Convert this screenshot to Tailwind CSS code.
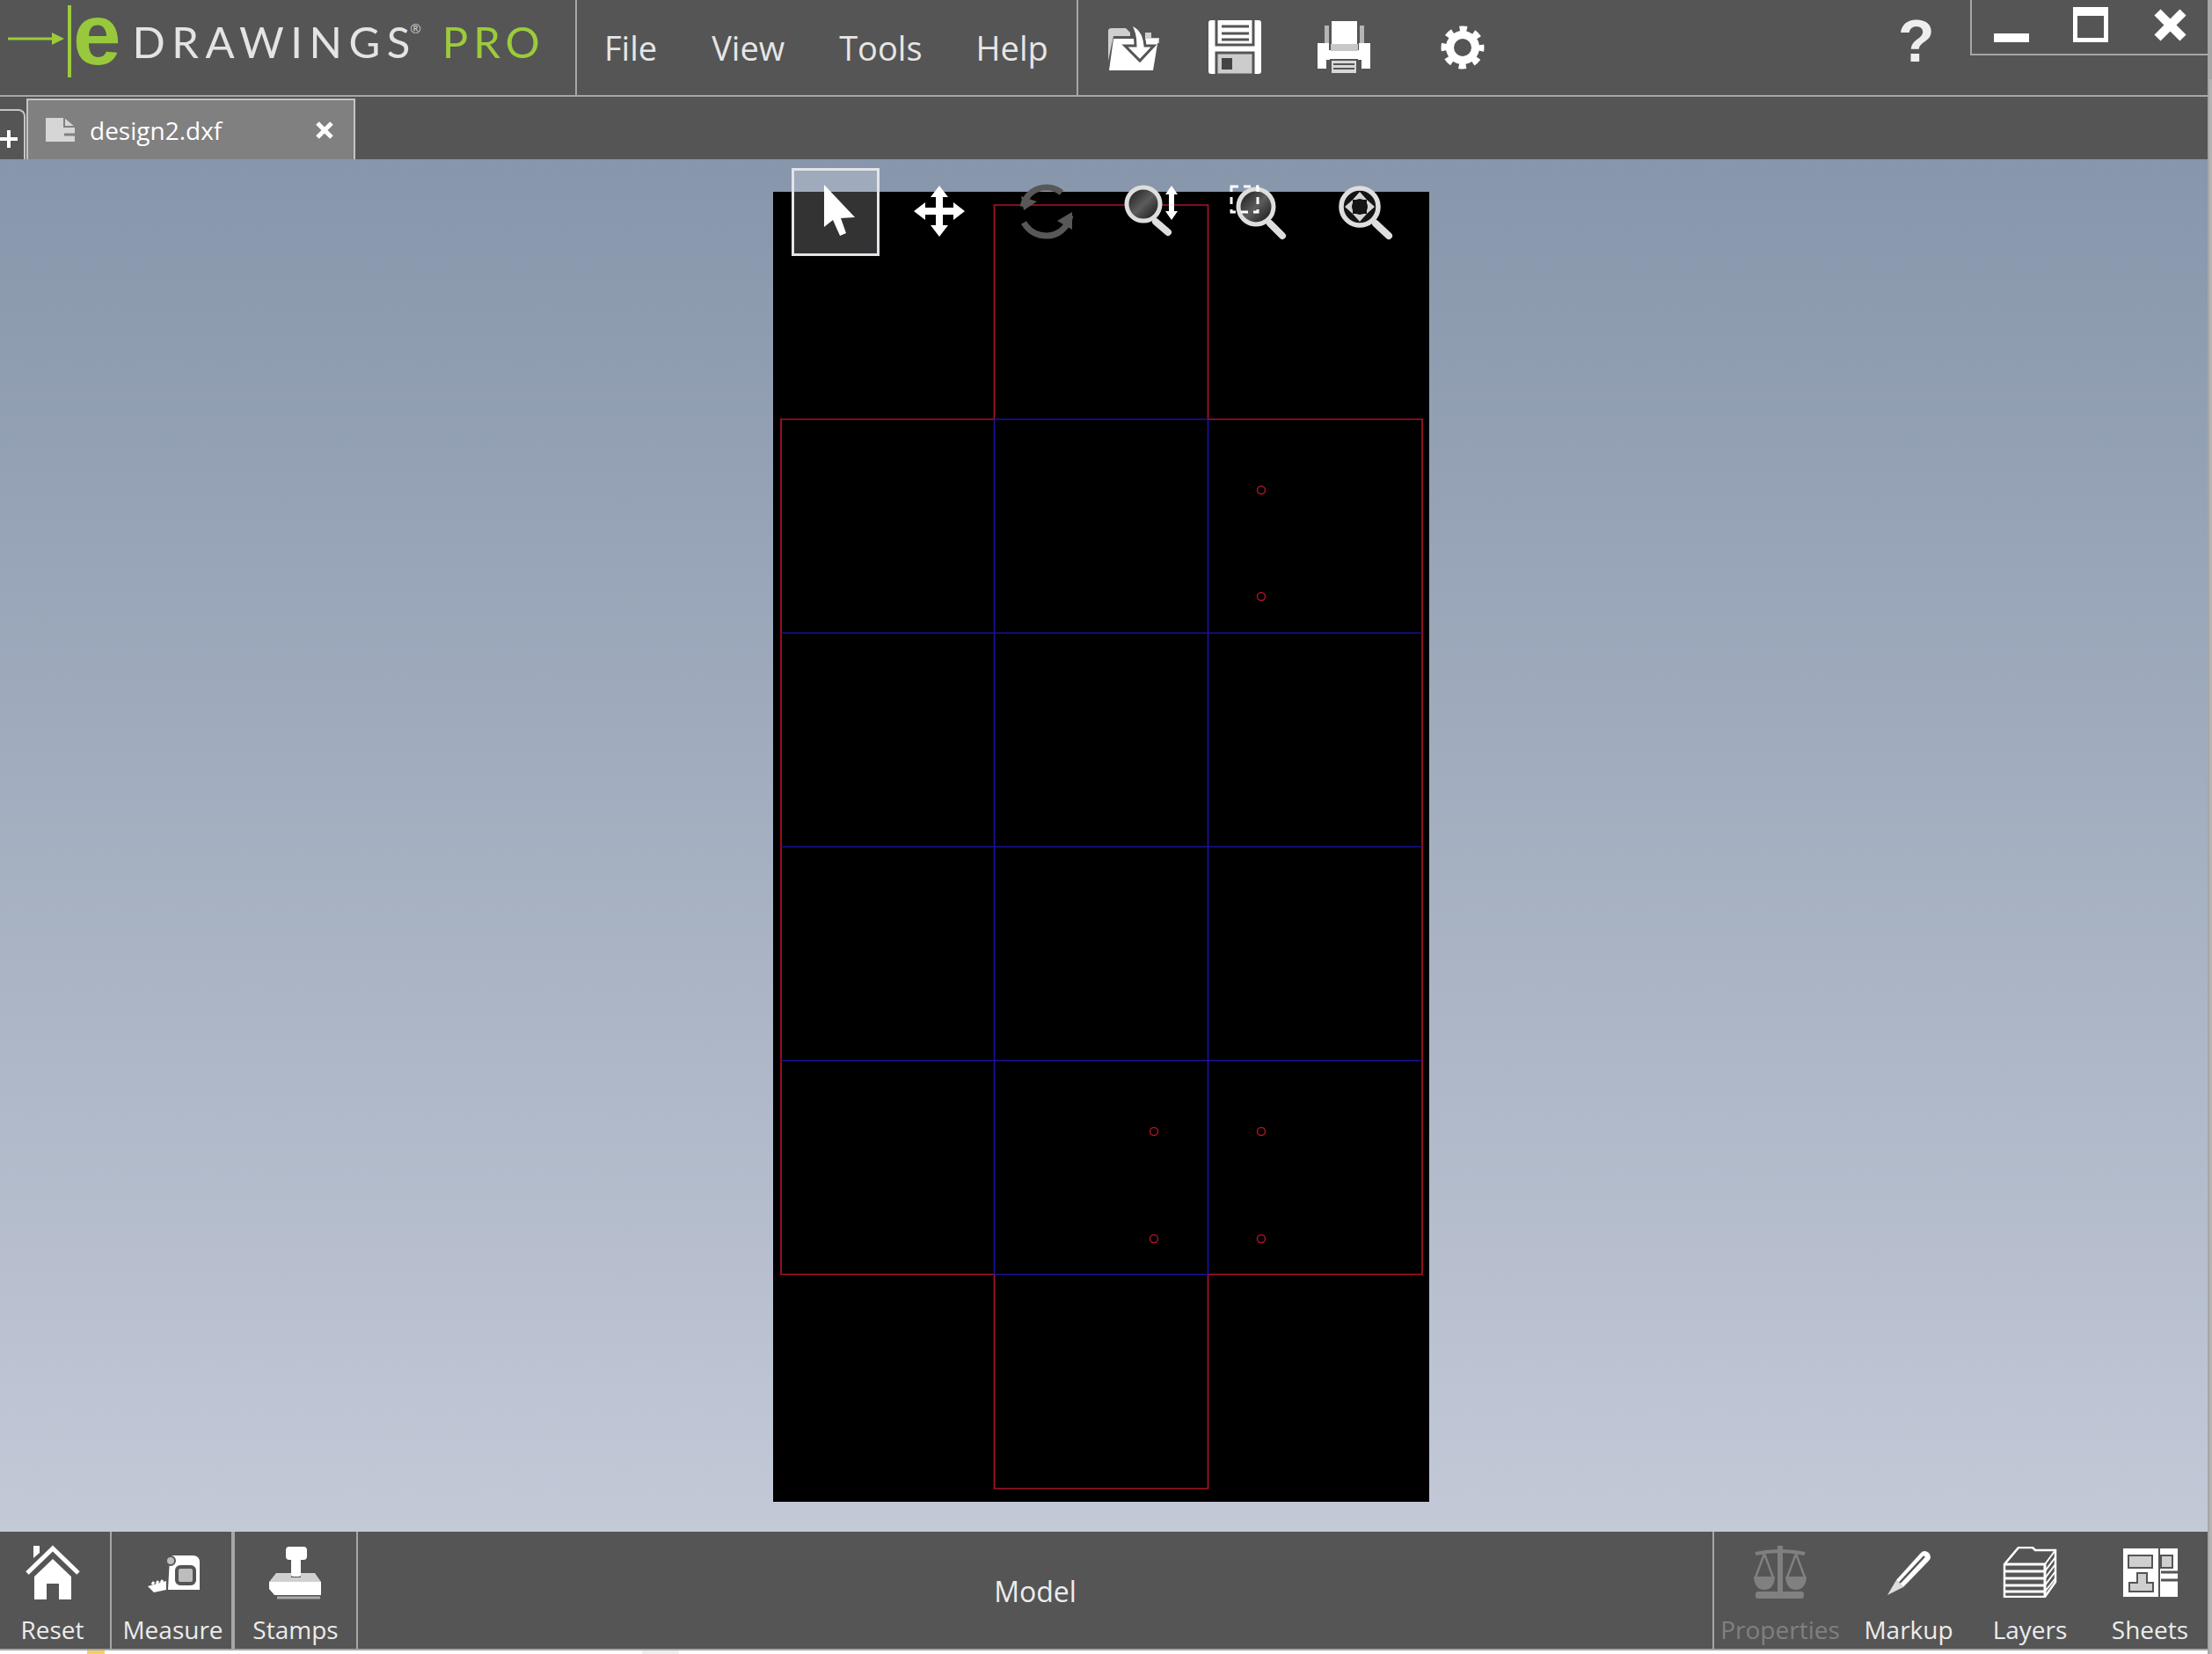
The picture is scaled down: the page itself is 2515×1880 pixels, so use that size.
<!DOCTYPE html>
<html lang="en">
<head>
    <meta charset="UTF-8">
    <title>eDrawings Pro</title>
    <script src="https://cdn.jsdelivr.net/npm/@tailwindcss/browser@4"></script>
</head>
<body class="bg-white overflow-hidden">
<div class="w-[2515px] h-[1880px] flex font-['Open_Sans',sans-serif]">
    <div class="w-[2510px] h-[1880px] flex flex-col">
        <!-- Top bar -->
        <header class="h-[110px] shrink-0 bg-[#555555] border-b-2 border-[#a6a6a6] flex">
            <div class="w-[656px] border-r-2 border-[#a6a6a6] flex items-start">
                <svg class="w-[84px] h-[108px] shrink-0" viewBox="0 0 84 108">
                    <path d="M9 44H62" stroke="#9ccb3b" stroke-width="3" />
                    <path d="M59 37L73 44L59 51Z" fill="#9ccb3b" />
                    <path d="M79 6V88" stroke="#9ccb3b" stroke-width="4" />
                </svg>
                <span class="text-[98px] leading-[78px] font-bold text-[#98c93c] font-['Liberation_Sans',sans-serif] ml-[-1px]">e</span>
                <span class="ml-[13px] mt-[17px] text-[49px] leading-[60px] tracking-[7.5px] text-[#e4e4e4] font-['Lato',sans-serif]">DRAWING<span class="tracking-normal">S</span></span>
                <span class="text-[15px] leading-[20px] mt-[22px] text-[#cccccc]">®</span>
                <span class="ml-[24px] mt-[17px] text-[49px] leading-[60px] tracking-[6px] text-[#9ccb3b] font-['Lato',sans-serif]">PRO</span>
            </div>
            <nav class="w-[570px] border-r-2 border-[#a6a6a6] flex items-center text-[38px] leading-[108px] text-[#e6e6e6] pl-[31px]">
                <span>File</span>
                <span class="ml-[62px]">View</span>
                <span class="ml-[62px]">Tools</span>
                <span class="ml-[61px]">Help</span>
            </nav>
            <div class="flex items-center flex-1">
                <!-- open -->
                <svg class="ml-[32px] w-[60px] h-[54px]" viewBox="0 0 60 54">
                    <path d="M2 42V8Q2 5 6 5H22L27 10V14H8Z" fill="#cfcfcf" />
                    <path d="M44 10H51V16H60V22H44Z" fill="#cfcfcf" />
                    <path d="M8 17H59L53 53H3Z" fill="#ffffff" />
                    <path d="M26 0C38 3 43 12 44 25H54L38 42L21 25H33C33 14 31 6 26 0Z" fill="#ffffff" stroke="#555555" stroke-width="3" />
                </svg>
                <!-- save -->
                <svg class="ml-[56px] w-[60px] h-[62px]" viewBox="0 0 60 62">
                    <rect x="0" y="0" width="60" height="61" rx="3" fill="#ffffff" />
                    <path d="M9 0V28H51V0" fill="none" stroke="#555555" stroke-width="3" />
                    <path d="M15 7H46M15 15H46M15 22H46" stroke="#555555" stroke-width="3" />
                    <rect x="9" y="37" width="42" height="25" fill="#cccccc" stroke="#555555" stroke-width="3" />
                    <rect x="15" y="43" width="12" height="13" fill="#444444" />
                </svg>
                <!-- print -->
                <svg class="ml-[64px] w-[60px] h-[60px]" viewBox="0 0 60 60">
                    <rect x="8" y="5" width="5" height="22" fill="#b5b5b5" />
                    <rect x="48" y="5" width="5" height="22" fill="#b5b5b5" />
                    <rect x="16" y="0" width="29" height="26" fill="#ffffff" />
                    <path d="M0 25H13V33H47V25H60V54H50V44H10V54H0Z" fill="#ffffff" />
                    <rect x="15" y="26" width="31" height="8" fill="#c8c8c8" />
                    <rect x="15" y="44" width="30" height="16" fill="#d8d8d8" stroke="#555555" stroke-width="2" />
                    <path d="M18 49H42M18 54H42" stroke="#555555" stroke-width="2" />
                </svg>
                <!-- settings -->
                <svg class="ml-[80px] w-[50px] h-[50px]" viewBox="0 0 50 50">
                    <circle cx="25" cy="25" r="14.5" fill="none" stroke="#ffffff" stroke-width="9" />
                    <circle cx="25" cy="25" r="21" fill="none" stroke="#ffffff" stroke-width="7" stroke-dasharray="8.25 8.25" stroke-dashoffset="4.1" />
                </svg>
                <span class="ml-[470px] mt-[-16px] text-[68px] leading-[60px] font-bold text-[#eeeeee] font-['Liberation_Sans',sans-serif]">?</span>
                <div class="ml-[40px] self-start flex-1 h-[63px] border-l-2 border-b-2 border-[#a6a6a6] flex items-start">
                    <div class="ml-[25px] mt-[38px] w-[40px] h-[10px] bg-white"></div>
                    <div class="ml-[50px] mt-[8px] w-[40px] h-[40px] border-white border-x-[5px] border-b-[5px] border-t-[10px]"></div>
                    <svg class="ml-[51px] mt-[9px] w-[39px] h-[39px]" viewBox="0 0 39 39">
                        <path d="M5 5L34 34M34 5L5 34" stroke="#ffffff" stroke-width="10" />
                    </svg>
                </div>
            </div>
        </header>
        <!-- Tab strip -->
        <div class="h-[71px] shrink-0 bg-[#555555] flex items-end">
            <div class="w-[29px] h-[57px] border-t-2 border-r-2 border-[#c4c4c4] rounded-tr-[8px]">
                <svg class="w-[20px] h-[20px] mt-[22px]" viewBox="0 0 20 20"><path d="M0 10H20M10 0V20" stroke="#ffffff" stroke-width="4" /></svg>
            </div>
            <div class="w-[374px] h-[69px] ml-[1px] bg-[#808080] border-2 border-b-0 border-[#c4c4c4] flex items-center">
                <svg class="ml-[19px] w-[35px] h-[28px] shrink-0" viewBox="0 0 35 28">
                    <path d="M1 0H22L34 10V27H1Z" fill="#d6d6d6" />
                    <path d="M22 0V10H34" fill="none" stroke="#808080" stroke-width="2" />
                    <path d="M22 19H34" stroke="#808080" stroke-width="3" />
                </svg>
                <span class="ml-[16px] text-[28px] leading-[40px] text-white">design2.dxf</span>
                <svg class="ml-[107px] w-[20px] h-[20px]" viewBox="0 0 20 20"><path d="M2 2L18 18M18 2L2 18" stroke="#ffffff" stroke-width="5" /></svg>
            </div>
        </div>
        <!-- Viewport -->
        <main class="h-[1560px] shrink-0 relative bg-gradient-to-b from-[#8796ab] to-[#c3c9d7] pl-[879px] pt-[37px]">
            <svg class="w-[746px] h-[1489px] bg-black" viewBox="879 218 746 1489">
                <g fill="none" stroke-width="1.7">
                    <path d="M1130.5 476.5V233H1373.5V476.5H1617V1448.5H1373.5V1692H1130.5V1448.5H888V476.5Z" stroke="#a81426" />
                    <path d="M1130.5 476.5H1373.5M888 719.5H1617M888 962.5H1617M888 1205.5H1617M1130.5 1448.5H1373.5M1130.5 476.5V1448.5M1373.5 476.5V1448.5" stroke="#1a119c" />
                    <g stroke="#a81426" stroke-width="1.5">
                        <circle cx="1434" cy="557" r="4.5" />
                        <circle cx="1434" cy="678" r="4.5" />
                        <circle cx="1312" cy="1286" r="4.5" />
                        <circle cx="1434" cy="1286" r="4.5" />
                        <circle cx="1312" cy="1408" r="4.5" />
                        <circle cx="1434" cy="1408" r="4.5" />
                    </g>
                </g>
            </svg>
            <!-- Floating view tools -->
            <div class="absolute left-[890px] top-[10px] flex">
                <div class="w-[120px] h-[100px] flex justify-center">
                    <div class="w-[100px] h-[100px] border-[3px] border-[#e2e4e8] bg-white/20 flex items-center justify-center">
                        <svg class="w-[80px] h-[80px]" viewBox="0 0 80 80"><path d="M27 9V57L37 49L45 67L52 64L46 47L62 46Z" fill="#ffffff" /></svg>
                    </div>
                </div>
                <div class="w-[120px] h-[100px] pt-[10px] flex justify-center">
                    <svg class="w-[80px] h-[80px]" viewBox="0 0 80 80">
                        <path d="M38 10L48 23H42V35H54V29L67 39L54 49V43H42V55H48L38 68L28 55H34V43H22V49L9 39L22 29V35H34V23H28Z" fill="#ffffff" />
                    </svg>
                </div>
                <div class="w-[120px] h-[100px] pt-[10px] flex justify-center">
                    <svg class="w-[80px] h-[80px]" viewBox="0 0 80 80">
                        <path d="M13 34C16 20 27 12 40 12C46 12 52 14 57 18M67 44C64 58 53 67 40 67C29 67 20 62 14 52" fill="none" stroke="#585858" stroke-width="7" />
                        <path d="M11 22L29 28L14 38ZM69 60L52 50L69 40Z" fill="#585858" />
                    </svg>
                </div>
                <div class="w-[120px] h-[100px] pt-[10px] flex justify-center">
                    <svg class="w-[80px] h-[80px] overflow-visible" viewBox="0 0 80 80">
                        <defs>
                            <linearGradient id="lens" x1="0" y1="0" x2="1" y2="1">
                                <stop offset="0" stop-color="#111111" />
                                <stop offset="0.5" stop-color="#5c5c5c" />
                                <stop offset="1" stop-color="#0c0c0c" />
                            </linearGradient>
                        </defs>
                        <circle cx="30" cy="31" r="19" fill="url(#lens)" stroke="#dedede" stroke-width="5" />
                        <path d="M44 51L58 63" stroke="#dedede" stroke-width="8" stroke-linecap="round" />
                        <path d="M62 10L69 20H65V39H69L62 49L55 39H59V20H55Z" fill="#ffffff" />
                    </svg>
                </div>
                <div class="w-[120px] h-[100px] pt-[10px] flex justify-center">
                    <svg class="w-[80px] h-[80px] overflow-visible" viewBox="0 0 80 80">
                        <circle cx="38" cy="34" r="20" fill="url(#lens)" stroke="#dedede" stroke-width="5" />
                        <path d="M54 53L68 67" stroke="#dedede" stroke-width="8" stroke-linecap="round" />
                        <rect x="10" y="11" width="30" height="29" fill="none" stroke="#ffffff" stroke-width="3" stroke-dasharray="8 6" />
                    </svg>
                </div>
                <div class="w-[120px] h-[100px] pt-[10px] flex justify-center">
                    <svg class="w-[80px] h-[80px] overflow-visible" viewBox="0 0 80 80">
                        <circle cx="36" cy="34" r="21" fill="#141414" stroke="#dedede" stroke-width="5.5" />
                        <path d="M54 53L69 67" stroke="#dedede" stroke-width="8" stroke-linecap="round" />
                        <path d="M36 17L44 26H28ZM36 51L28 42H44ZM19 34L28 26V42ZM53 34L44 42V26Z" fill="#d4d4d4" />
                        <circle cx="36" cy="34" r="9" fill="#141414" />
                    </svg>
                </div>
            </div>
        </main>
        <!-- Bottom bar -->
        <footer class="h-[135px] shrink-0 bg-[#555555] border-b-2 border-[#a6a6a6] flex text-[28px] leading-[38px] text-[#ececec]">
            <div class="w-[127px] pr-[6px] border-r-2 border-[#a6a6a6] flex flex-col items-center">
                <div class="h-[92px] flex items-center">
                    <svg class="w-[62px] h-[62px]" viewBox="0 0 62 62">
                        <path d="M2 32L31 4L60 32" fill="none" stroke="#ffffff" stroke-width="5" />
                        <path d="M9 1L16 1L16 9L9 15Z" fill="#ffffff" />
                        <path d="M10 36L31 16L52 36V62H38V44H24V62H10Z" fill="#ffffff" />
                    </svg>
                </div>
                <span>Reset</span>
            </div>
            <div class="w-[140px] pl-[3px] border-r-4 border-[#a6a6a6] flex flex-col items-center">
                <div class="h-[92px] flex items-center">
                    <svg class="w-[60px] h-[44px] mt-[4px]" viewBox="0 0 60 44">
                        <path d="M26 4Q26 1 30 1H52Q60 1 60 9V40H24Z" fill="#ffffff" />
                        <circle cx="27" cy="7" r="5" fill="#bdbdbd" stroke="#555555" stroke-width="2" />
                        <rect x="34" y="14" width="20" height="19" rx="4" fill="#bdbdbd" stroke="#555555" stroke-width="4" />
                        <path d="M22 30L1 36L8 43L22 40Z" fill="#ffffff" />
                        <path d="M6 34L8 31M11 33L13 30M16 32L18 29" stroke="#ffffff" stroke-width="3" />
                    </svg>
                </div>
                <span>Measure</span>
            </div>
            <div class="w-[140px] border-r-2 border-[#a6a6a6] flex flex-col items-center">
                <div class="h-[92px] flex items-center">
                    <svg class="w-[60px] h-[60px] mt-[2px]" viewBox="0 0 60 60">
                        <rect x="19" y="0" width="24" height="15" rx="4" fill="#ffffff" />
                        <rect x="25" y="14" width="11" height="20" rx="2" fill="#ffffff" />
                        <path d="M8 30H25V35H36V30H52L59 40H0Z" fill="#d0d0d0" />
                        <path d="M0 40H59V55H6L0 48Z" fill="#ffffff" />
                        <path d="M9 58H58" stroke="#aaaaaa" stroke-width="3" />
                    </svg>
                </div>
                <span>Stamps</span>
            </div>
            <div class="w-[1542px] flex items-center justify-center border-r-2 border-[#a6a6a6]">
                <span class="mt-[2px] text-[32px] leading-[44px]">Model</span>
            </div>
            <div class="w-[148px] pl-[2px] flex flex-col items-center text-[#808080]">
                <div class="h-[92px] flex items-center">
                    <svg class="w-[62px] h-[60px]" viewBox="0 0 62 60">
                        <rect x="28" y="0" width="6" height="52" fill="#808080" />
                        <rect x="3" y="52" width="55" height="8" rx="3" fill="#808080" />
                        <path d="M3 9Q31 3 59 9" fill="none" stroke="#808080" stroke-width="4" />
                        <path d="M13 9L3 36M13 9L23 36M49 9L39 36M49 9L59 36" fill="none" stroke="#808080" stroke-width="2.5" />
                        <path d="M1 35H25Q24 50 13 50Q2 50 1 35ZM37 35H61Q60 50 49 50Q38 50 37 35Z" fill="#808080" />
                    </svg>
                </div>
                <span class="w-full text-center">Properties</span>
            </div>
            <div class="w-[146px] flex flex-col items-center">
                <div class="h-[92px] flex items-center">
                    <svg class="w-[52px] h-[54px]" viewBox="0 0 52 54">
                        <path d="M12 36L40 5Q44 1 49 5Q53 10 49 14L20 44Z" fill="#ffffff" />
                        <path d="M16 39L44 9" stroke="#555555" stroke-width="2.5" />
                        <path d="M12 36L20 44L2 53Z" fill="#dddddd" />
                    </svg>
                </div>
                <span>Markup</span>
            </div>
            <div class="w-[132px] pr-[2px] flex flex-col items-center">
                <div class="h-[92px] flex items-center">
                    <svg class="w-[62px] h-[58px]" viewBox="0 0 62 58">
                        <path d="M2 20L18 1H34L37 4H60L60 40L48 57H2Z" fill="none" stroke="#ffffff" stroke-width="2.5" />
                        <path d="M2 20H48V57M2 28H48M2 36H48M2 44H48M2 51H48" fill="none" stroke="#ffffff" stroke-width="3" />
                        <path d="M48 20L60 4M48 28L60 12M48 36L60 20M48 44L60 28M48 51L60 36" fill="none" stroke="#ffffff" stroke-width="2" />
                    </svg>
                </div>
                <span>Layers</span>
            </div>
            <div class="w-[133px] pl-[6px] flex flex-col items-center">
                <div class="h-[92px] flex items-center">
                    <svg class="w-[62px] h-[55px]" viewBox="0 0 62 55">
                        <rect width="62" height="55" fill="#ffffff" />
                        <rect x="6" y="8" width="27" height="14" fill="#cfcfcf" stroke="#555555" stroke-width="2" />
                        <rect x="43" y="8" width="13" height="14" fill="#cfcfcf" stroke="#555555" stroke-width="2" />
                        <path d="M16 28H27V39H34V49H7V39H16Z" fill="#cfcfcf" stroke="#555555" stroke-width="2" />
                        <path d="M43 27H62M43 36H62" stroke="#555555" stroke-width="3" />
                        <path d="M41 0V55" stroke="#555555" stroke-width="2" />
                    </svg>
                </div>
                <span>Sheets</span>
            </div>
        </footer>
        <!-- Strip of what lies behind the window -->
        <div class="h-[4px] flex">
            <div class="ml-[99px] w-[20px] bg-[#f5cf62]"></div>
            <div class="ml-[611px] w-[42px] bg-[#eeeeee]"></div>
        </div>
    </div>
    <div class="w-[2px] bg-[#a6a6a6]"></div>
    <div class="w-[3px] flex flex-col">
        <div class="h-[90px] bg-[#a6a6a6]"></div>
        <div class="flex-1 bg-[#b4b4b4]"></div>
    </div>
</div>
</body>
</html>
